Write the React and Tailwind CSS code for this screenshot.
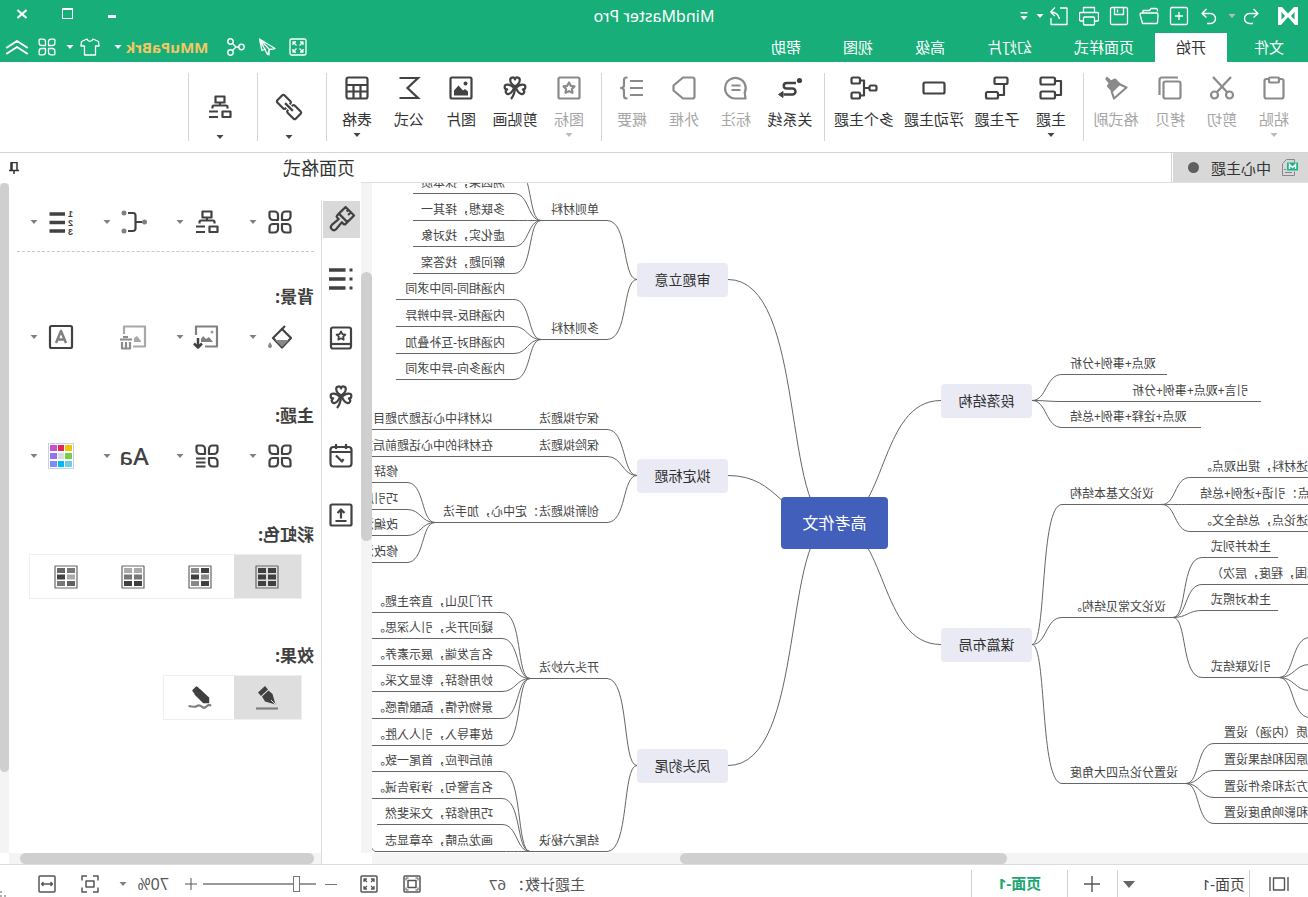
import React, { useState } from 'react';

const Svg = ({ children, w = 24, h = 24, size = 'w-6 h-6', sw = 2.2, className = '' }) => (
    <svg viewBox={`0 0 ${w} ${h}`} className={`${size} shrink-0 ${className}`} fill="none" stroke="currentColor"
        strokeWidth={sw} strokeLinejoin="round" aria-hidden="true">
        {children}
    </svg>
);

const Caret = ({ className = '' }) => (
    <svg viewBox="0 0 8 4" className={`w-2 h-1 shrink-0 ${className}`} fill="currentColor" aria-hidden="true">
        <path d="M.5 0h7L4 4z" />
    </svg>
);

/* ---------- icons ---------- */

const Star = () => <path d="M12 6.5l1.8 3.3 3.7.6-2.6 2.7.6 3.7-3.5-1.6-3.5 1.6.6-3.7-2.6-2.7 3.7-.6z" />;

const heart = 'M12 10.5C9 8.5 7.3 6.5 7.3 4.4A2.4 2.4 0 0 1 12 3.4a2.4 2.4 0 0 1 4.7 1C16.7 6.5 15 8.5 12 10.5z';

const Clover = () => (
    <>
        <path d={heart} />
        <path d={heart} transform="rotate(-104 12 11.5)" />
        <path d={heart} transform="rotate(104 12 11.5)" />
        <path d="M12 11c0 5 1.5 9 4 12" />
    </>
);

const OrgChart = () => (
    <>
        <rect x="7.5" y="1.5" width="9" height="6" />
        <path d="M12 7.5V11M4.5 13.5V12A1.5 1.5 0 0 1 6 10.5h12a1.5 1.5 0 0 1 1.5 1.5v1.5M14 16.5h9M14 22h9" />
        <rect x="1.5" y="16.5" width="8" height="5.5" />
    </>
);

const leaf = 'M2.5 1.5H6.5A3.5 3.5 0 0 1 10 5V10H5A3.5 3.5 0 0 1 1.5 6.5V2.5a1 1 0 0 1 1-1z';

const Petals = ({ list }) => (
    <>
        <path d={leaf} />
        <path d={leaf} transform="matrix(-1 0 0 1 24 0)" />
        <path d={leaf} transform="matrix(1 0 0 -1 0 24)" />
        {list
            ? <path d="M13.5 14.5H23M13.5 18.5H23M13.5 22.5H23" />
            : <path d={leaf} transform="matrix(-1 0 0 -1 24 24)" />}
    </>
);

const icons = {
    paste: <><rect x="2.5" y="3" width="19" height="19.5" rx="2" /><rect x="7" y="1.5" width="10" height="5" rx="1" fill="#fff" /></>,
    cut: <><path d="M3 1l14 15M21 1L7 16" /><circle cx="4.5" cy="19" r="3.5" /><circle cx="19.5" cy="19" r="3.5" /></>,
    copy: <><rect x="1.5" y="5.5" width="17" height="17" rx="2" /><path d="M4 1.5h16A2.5 2.5 0 0 1 22.5 4v15" /></>,
    brush: <><path d="M21 2L17 5.5l-4-2L8.5 8l7 7 4.5-5-2-3L21.500 3z" fill="currentColor" /><path d="M9 8L1.5 11.5 14 22.5l2.500-7.500" /></>,
    topic: <><rect x="8" y="1.5" width="14.5" height="7" rx="1.5" /><rect x="8" y="15.5" width="14.5" height="7" rx="1.5" /><path d="M8 5H2v14h6" /></>,
    subtopic: <><rect x="1.5" y="1.5" width="13" height="6.5" rx="1.5" /><rect x="11" y="16" width="12" height="6.5" rx="1.5" /><path d="M5 8v11h6" /></>,
    floating: <rect x="1.5" y="6.5" width="21" height="11" rx="1.5" />,
    multi: <><rect x="-.5" y="9.5" width="7" height="5" rx="1.5" /><rect x="16" y="1.5" width="8.5" height="6" rx="1.5" /><rect x="16" y="16.5" width="8.5" height="6" rx="1.5" /><path d="M6.5 12H12M16 4.5H12v15h4" /></>,
    relation: <><path d="M6 7h9.5a2.75 2.75 0 0 1 0 5.5h-6a2.75 2.75 0 0 0 0 6h9" strokeWidth="2.5" /><circle cx="2.5" cy="4.5" r="1.5" fill="currentColor" /><path d="M19 15.5l4.5 3-4.5 3z" fill="currentColor" strokeWidth="1" /></>,
    callout: <><path d="M2.5 22.5l.8-5.8A10.3 10.3 0 1 1 12 22.5z" /><path d="M7.5 9.5h9M7.5 14h9" /></>,
    boundary: <path d="M3.5 1.5H13l9.5 8v5l-9.5 8H3.5a2 2 0 0 1-2-2v-17a2 2 0 0 1 2-2z" />,
    summary: <><path d="M1 5h13M1 12h13M1 19h13" /><path d="M16.5 1.5h1A2.5 2.5 0 0 1 20 4v5c0 1.5 1 3 3 3-2 0-3 1.5-3 3v5a2.5 2.5 0 0 1-2.5 2.5h-1" /></>,
    mark: <><rect x="1.5" y="1.5" width="21" height="21" rx="1.5" /><Star /></>,
    clover: <Clover />,
    picture: <><rect x="1.5" y="1.5" width="21" height="21" rx="1.5" /><circle cx="7.5" cy="7.5" r="2" fill="currentColor" stroke="none" /><path d="M5 19.5v-4L8 13l2 1.5 4.5-5 4.5 5v5z" fill="currentColor" stroke="none" /></>,
    formula: <path d="M21.5 2H3l10.5 10L3 22h18.5" strokeLinejoin="miter" />,
    table: <><rect x="1.5" y="1.5" width="21" height="21" rx="2" /><path d="M2 9h20M2 15.5h20M8.5 9v13M15.5 9v13" /></>,
    link: (
        <g transform="rotate(-45 12 12)">
            <path d="M9 7H.5A1.500 1.500 0 0 0-1 8.500v7A1.500 1.500 0 0 0 .5 17H9a1.500 1.500 0 0 0 1.500-1.500v-1M9 7a1.500 1.500 0 0 1 1.500 1.500v1" />
            <path d="M15 7h8.500A1.500 1.500 0 0 1 25 8.500v7a1.500 1.500 0 0 1-1.500 1.500H15a1.500 1.500 0 0 1-1.500-1.500v-1M15 7a1.500 1.500 0 0 0-1.500 1.500v1" />
            <path d="M6.5 12h11" />
        </g>
    ),
    org: <OrgChart />,
    petals: <Petals />,
    petalList: <Petals list />,
    fork: <><path d="M4 12h6.500M18 3h-5a2.500 2.500 0 0 0-2.500 2.500v13A2.500 2.500 0 0 0 13 21h5" /><g fill="#808080" stroke="none"><circle cx="1.5" cy="12" r="2.5" /><circle cx="22" cy="3" r="2.5" /><circle cx="22" cy="21" r="2.5" /></g></>,
    numbers: <><path d="M8 4h15.5M8 12.5h15.5M8 21h15.5" strokeWidth="3.5" /><g fill="currentColor" stroke="none" fontSize="9" fontWeight="700" fontFamily="Liberation Sans"><text x="0" y="7">1</text><text x="0" y="16">2</text><text x="0" y="25">3</text></g></>,
    bucket: <><path d="M10 4l9 9-9 9.5L1 13z" /><path d="M10.5 4.5L7 1" /><path d="M3 15h14l-7 7z" fill="#888" stroke="none" /><path d="M22 17c1 2 2 3 2 4a2 2 0 0 1-4 0c0-1 1-2 2-4z" fill="#888" stroke="none" /></>,
    imageDown: <><path d="M23 10V1.5H2v20h12" stroke="#808080" /><path d="M6 17l4-5 3 2 3-3 2 3v3z" fill="#808080" stroke="none" /><circle cx="7" cy="7" r="1.5" fill="#999" stroke="none" /><path d="M21 13v9M17 18.5l4 4 4-4" strokeWidth="2.5" /></>,
    imageTrash: <><path d="M22 9V1.5H1v20h12" /><path d="M5 16l4-5 3 2v4H5z" fill="currentColor" stroke="none" /><path d="M14 14.5h12M18 12h5" stroke="#8c8c8c" /><path d="M16 17v6.5h8V17M20 17v6" stroke="#8c8c8c" /></>,
    letter: <><rect x="1" y="1" width="22" height="22" rx="1.5" /><path d="M7 18l5-12 5 12M8.5 14.5h7" stroke="#808080" strokeWidth="2.5" /></>,
    paint: <g transform="rotate(-45 12 12)"><path d="M6-.5h12V9H6zM6 9v2.5A1.5 1.5 0 0 0 7.5 13h2.3L9 22a3 3 0 0 0 6 0l-.8-9h2.3a1.5 1.5 0 0 0 1.5-1.5V9M10.5-.5v4M14-.5V2" /></g>,
    outline: <><path d="M7.5 3H24M7.5 12H24M7.5 21H24" strokeWidth="3.5" /><path d="M.5 3h3M.5 12h3M.5 21h3" strokeWidth="3" /></>,
    stickers: <><rect x="2" y="1.5" width="20" height="21" rx="2" /><path d="M2 18h20" /><path d="M12 5.5l1.4 2.7 3 .4-2.2 2.1.5 3-2.7-1.4-2.7 1.4.5-3-2.2-2.1 3-.4z" strokeWidth="1.8" /></>,
    calendar: <><rect x="1.5" y="3" width="21" height="19.5" rx="3" /><path d="M2 8h20M7 0v5M17 0v5M17 11.5l-6 6-1.500-2.500" /></>,
    upload: <><rect x="1.5" y="1.5" width="21" height="21" rx="1.5" /><path d="M12 15.5V7M8.5 10L12 6.5l3.5 3.5M6.5 18h11" /></>,
    pen: <><path d="M14 0l7 6.5-3 3.5-7-6.5z" fill="currentColor" stroke="none" /><path d="M10.5 4.500l6.500 6-3 5-10.500 3L6.500 8z" fill="currentColor" stroke="none" /><path d="M3.500 18.500L8 14" stroke="#e0e0e0" strokeWidth="1" /><path d="M1 22.5h22" stroke="#808080" /></>,
    pencil: <><path d="M13.5 2.5l2-1.500L19 4.500l-1.500 2zM12.500 3.500l4.500 4.500-8.500 8.500h-5V12z" fill="currentColor" strokeWidth="1.500" /><path d="M1 20c2-2 3-1 4.500.5s3.500 1.500 5 0S13.500 19 15 20s4 1 8.500 0" stroke="#808080" /></>,
};

const Swatch = ({ cells, plain }) => (
    <Svg sw={1.2}>
        <rect x="1" y="1" width="22" height="22" stroke="#666" fill={plain ? 'none' : '#fff'} />
        {cells.map((c, i) => (
            <rect key={i} x={i % 2 ? 13 : 3} y={3 + Math.floor(i / 2) * 6.5} width="8" height="5" fill={c} stroke="none" />
        ))}
    </Svg>
);

/* ---------- title bar ---------- */

const quickTools = [
    { name: '新建', icon: <><rect x="1.5" y="1.5" width="17" height="17" rx="1.5" /><path d="M10 6v8M6 10h8" /></> },
    { name: '打开', icon: <><path d="M1.5 5.5V4A1.5 1.5 0 0 1 3 2.5h5l1.5 2H16v2M2 17.5h14.5l2.5-9A1.5 1.5 0 0 0 17.5 7h-15A1.5 1.5 0 0 0 1 8.5l.5 8z" /></> },
    { name: '保存', icon: <><rect x="1.5" y="1.5" width="17" height="17" rx="1.5" /><path d="M5.5 1.5v7h9v-7M11.5 3.5v3" /></> },
    { name: '打印', icon: <><path d="M4.5 6V1.5h11V6M4 15H1.5a1 1 0 0 1-1-1V7.5a1 1 0 0 1 1-1h17a1 1 0 0 1 1 1V14a1 1 0 0 1-1 1H16" /><rect x="4.5" y="11" width="11" height="8" rx="1" /></> },
    { name: '导出', icon: <><path d="M9 2H2v16.5h16V12M18.5 6L14 1.5M18.5 6L14 10M18.5 6c-5 0-8 2-9 7" /></> },
];

const TitleBar = () => (
    <div className="grid h-[31px] grid-cols-[1fr_auto_1fr] items-center pb-px">
        <div className="flex items-center pl-2.5">
            <svg viewBox="0 0 20 18" className="w-5 h-[18px] mr-3" fill="#fff" aria-hidden="true">
                <path d="M0 0h4l6 6.5L16 0h4v18h-3l-7-8-7 8H0z" />
                <path d="M3.5 5v7.5L7 9zM16.5 5v7.5L13 9z" fill="#17ae79" />
            </svg>
            <button aria-label="撤销" className="flex w-[30px] justify-center">
                <Svg size="w-[18px] h-[18px]" w={18} h={18} sw={1.4}><path d="M6.5 2L2 6.5l4.5 4M2 6.5h8.5a5 5 0 0 1 0 10H7" /></Svg>
            </button>
            <Caret className="mr-1 text-[#bcbcbc]" />
            <button aria-label="重做" className="flex w-[30px] justify-center">
                <Svg size="w-[18px] h-[18px]" w={18} h={18} sw={1.4}><path d="M11.5 2L16 6.5l-4.5 4M16 6.5H7.5a5 5 0 0 0 0 10H11" /></Svg>
            </button>
            {quickTools.map((t) => (
                <button key={t.name} aria-label={t.name} className="flex w-[30px] justify-center">
                    <Svg size="w-5 h-5" w={20} h={20} sw={1.3}>{t.icon}</Svg>
                </button>
            ))}
            <Caret />
            <svg viewBox="0 0 8 8" className="ml-2 w-2 h-2" fill="#fff" aria-hidden="true"><path d="M.5 0h7v1.5h-7zM.5 4h7L4 8z" /></svg>
        </div>
        <h1 className="text-base leading-5">MindMaster Pro</h1>
        <div className="flex justify-end">
            <button aria-label="最小化" className="flex w-[45px] h-[31px] items-center justify-center"><span className="mt-0.5 h-[3px] w-2 bg-white" /></button>
            <button aria-label="最大化" className="flex w-[45px] h-[31px] items-center justify-center"><span className="h-[11px] w-[11px] border border-t-2 border-white mb-1" /></button>
            <button aria-label="关闭" className="flex w-[45px] h-[31px] items-center justify-center">
                <Svg size="w-2.5 h-2.5" w={10} h={10} sw={2} className="mb-1"><path d="M.5 1l9 8M9.5 1l-9 8" /></Svg>
            </button>
        </div>
    </div>
);

const menus = ['文件', '开始', '页面样式', '幻灯片', '高级', '视图', '帮助'];

const MenuBar = () => {
    const [active, setActive] = useState('开始');
    return (
        <div className="flex h-[31px] items-end justify-between">
            <div className="flex pl-[3px]">
                {menus.map((m) => (
                    <button key={m} onClick={() => setActive(m)}
                        className={`h-[29px] px-[21px] text-[15px] leading-[29px] ${active === m ? 'bg-white text-[#333]' : 'text-white'} ${m === '文件' ? 'mr-1.5' : ''}`}>
                        {m}
                    </button>
                ))}
            </div>
            <div className="flex h-[31px] items-center pr-1.5">
                <button aria-label="全屏" className="flex w-[31px] justify-center">
                    <Svg size="w-[18px] h-[18px]" w={18} h={18} sw={1.3}><rect x="1" y="1" width="16" height="16" rx="1.5" /><path d="M4 7V4h3M4 4l3.5 3.5M14 7V4h-3M14 4l-3.5 3.5M4 11v3h3M4 14l3.5-3.5M14 11v3h-3M14 14l-3.5-3.5" /></Svg>
                </button>
                <button aria-label="发送" className="flex w-[31px] justify-center">
                    <Svg size="w-[18px] h-[18px]" w={18} h={18} sw={1.3}><path d="M16.5 1L1 10.5l5.500 1 2 5zM16.5 1L14 12.5l-4-1.500M16.5 1l-10 10.500M7 17.5v-6" /></Svg>
                </button>
                <button aria-label="分享" className="flex w-[31px] justify-center">
                    <Svg size="w-[18px] h-[18px]" w={18} h={18} sw={1.4}><circle cx="3.5" cy="9" r="2.7" /><circle cx="14.5" cy="3.5" r="2.7" /><circle cx="14.5" cy="14.5" r="2.7" /><path d="M6 9h3l3.5-3.5M9 9l3.5 3.5" /></Svg>
                </button>
                <button className="ml-3 flex items-center gap-1">
                    <span className="text-[15px] leading-5 font-bold text-[#f5c763]">MMuPaBrk</span>
                    <Caret />
                </button>
                <button aria-label="主题皮肤" className="ml-3.5 flex items-center gap-1.5">
                    <Svg size="w-5 h-5" w={20} h={20} sw={1.3}><path d="M7 2L1.5 4.500 1 9h3.500v9h11V9H19l-.5-4.500L13 2c-.5 1.500-1.500 2.300-3 2.300S7.500 3.500 7 2z" /></Svg>
                    <Caret />
                </button>
                <button aria-label="应用" className="ml-2.5">
                    <Svg size="w-[18px] h-[18px]" sw={1.7}><Petals /></Svg>
                </button>
                <button aria-label="收起" className="ml-2.5">
                    <Svg size="w-[22px] h-4" w={22} h={16} sw={2}><path d="M1 8.5L11 2l10 6.5M1 14.5L11 8l10 6.5" strokeLinecap="round" /></Svg>
                </button>
            </div>
        </div>
    );
};

/* ---------- ribbon ---------- */

const ribbon = [
    { pad: 'pl-2 pr-1', items: [
        { label: '粘贴', icon: 'paste', caret: true, off: true, w: 'w-[52px]' },
        { label: '剪切', icon: 'cut', off: true, w: 'w-[52px]' },
        { label: '拷贝', icon: 'copy', off: true, w: 'w-[52px]' },
        { label: '格式刷', icon: 'brush', off: true, w: 'w-14' },
    ] },
    { pad: 'pl-1.5 pr-1', items: [
        { label: '主题', icon: 'topic', caret: true, w: 'w-[52px]' },
        { label: '子主题', icon: 'subtopic', w: 'w-14' },
        { label: '浮动主题', icon: 'floating', w: 'w-[70px]' },
        { label: '多个主题', icon: 'multi', w: 'w-[70px]' },
    ] },
    { pad: 'pl-1.5 pr-1', items: [
        { label: '关系线', icon: 'relation', w: 'w-14' },
        { label: '标注', icon: 'callout', off: true, w: 'w-[52px]' },
        { label: '外框', icon: 'boundary', off: true, w: 'w-[52px]' },
        { label: '概要', icon: 'summary', off: true, w: 'w-[52px]' },
    ] },
    { pad: 'pl-1.5 pr-1', items: [
        { label: '图标', icon: 'mark', caret: true, off: true, w: 'w-[52px]' },
        { label: '剪贴画', icon: 'clover', w: 'w-14' },
        { label: '图片', icon: 'picture', w: 'w-[52px]' },
        { label: '公式', icon: 'formula', w: 'w-[52px]' },
        { label: '表格', icon: 'table', caret: true, w: 'w-[52px]' },
    ] },
];

const Divider = () => <div className="mt-[11px] h-[68px] w-px bg-[#d4d4d4]" />;

const Ribbon = () => (
    <div className="flex h-[91px] border-b border-[#d4d4d4] bg-white">
        {ribbon.map((g, i) => (
            <React.Fragment key={i}>
                <div className={`flex ${g.pad}`}>
                    {g.items.map((b) => (
                        <button key={b.label} disabled={b.off} className={`flex flex-col items-center pt-3.5 ${b.w}`}>
                            <Svg className={`overflow-visible ${b.off ? 'text-[#8a8a8a]' : 'text-[#424242]'}`}>{icons[b.icon]}</Svg>
                            <span className={`mt-[9px] text-[15px] leading-5 whitespace-nowrap ${b.off ? 'text-[#a6a6a6]' : 'text-[#333]'}`}>{b.label}</span>
                            {b.caret && <Caret className={`mt-1 ${b.off ? 'text-[#bbb]' : 'text-[#404454]'}`} />}
                        </button>
                    ))}
                </div>
                <Divider />
            </React.Fragment>
        ))}
        {[['超链接', 'link'], ['布局', 'org']].map(([label, icon]) => (
            <React.Fragment key={icon}>
                <button aria-label={label} className="flex w-[68px] flex-col items-center pl-1.5 pt-[33px] text-[#424242]">
                    <Svg className="overflow-visible">{icons[icon]}</Svg>
                    <Caret className="mt-4 text-[#404454]" />
                </button>
                <Divider />
            </React.Fragment>
        ))}
    </div>
);

/* ---------- mind map ---------- */

const mainTopics = [
    { text: '审题立意', x: 580, y: 96, link: 580 },
    { text: '拟定标题', x: 580, y: 292, link: 580 },
    { text: '凤头豹尾', x: 580, y: 582, link: 580 },
    { text: '段落结构', x: 276, y: 217, link: 367 },
    { text: '谋篇布局', x: 276, y: 461, link: 367 },
];

// from: end of the parent's line, x/y: where this line starts, end: where it stops, tx: text edge
const right = (from, x, end, tx, rows) => rows.map(([y, text, stop]) => ({ from, x, y, end: stop || end, tx, text }));
const left = (from, x, end, tx, rows) => right(from, x, end, tx, rows).map((t) => ({ ...t, flip: true }));

const topics = [
    ...right([671, 96], 701, 767, 709, [[37, '单则材料'], [156, '多则材料']]),
    ...right([767, 37], 794, 895, 803, [[-17, ''], [10, '溯因果，探本质'], [37, '多联想，择其一'], [63, '虚化实，找对象'], [90, '解问题，找答案']]),
    ...right([767, 156], 794, 912, 803, [[116, '内涵相同-同中求同'], [143, '内涵相反-异中辨异'], [170, '内涵相对-互补叠加'], [196, '内涵多向-异中求同']]),
    ...right([671, 292], 701, 960, 709, [[246, '保守拟题法'], [273, '保险拟题法'], [339, '创新拟题法：定中心，加手法', 873]]),
    ...right([780, 246], 806, 960, 815, [[246, '以材料中心话题为题目']]),
    ...right([780, 273], 806, 960, 815, [[273, '在材料的中心话题前后加词']]),
    ...right([873, 339], 901, 960, 910, [[299, '修辞'], [326, '巧引用'], [352, '改编法'], [379, '修改法']]),
    ...right([671, 582], 701, 778, 709, [[495, '开头六妙法'], [668, '结尾六秘诀']]),
    ...right([778, 495], 806, 960, 815, [[429, '开门见山，直奔主题。'], [455, '疑问开头，引人深思。'], [482, '名言发端，展示素养。'], [508, '妙用修辞，彰显文采。'], [535, '景物传情，酝酿情感。'], [562, '故事导入，引人入胜。']]),
    ...right([778, 668], 806, 960, 815, [[588, '前后呼应，首尾一致。'], [615, '名言警句，谆谆告诫。'], [641, '巧用修辞，文采斐然', 931], [668, '画龙点睛，卒章显志', 932]]),
    ...right([932, 668], 940, 960, 950, [[662, '']]),

    ...left([276, 217], 246, 141, 238, [[191, '观点+事例+分析'], [244, '观点+诠释+事例+总结', 107]]),
    ...left([276, 217], 246, 47, 176, [[218, '引言+观点+事例+分析']]),
    ...left([276, 461], 246, 146, 238, [[321, '议论文基本结构'], [434, '议论文常见结构。', 135], [600, '设置分论点四大角度', 122]]),
    ...left([146, 321], 118, -10, 108, [[294, '述材料，提出观点。'], [321, '点：引语+述例+总结'], [348, '述论点，总结全文。']]),
    ...left([135, 434], 106, 30, 97, [[374, '主体并列式'], [401, '范围，程度，层次）', -10], [427, '主体对照式'], [494, '引议联结式', 29]]),
    ...left([29, 494], -2, -10, -10, [[454, ''], [481, ''], [507, ''], [534, '']]),
    ...left([122, 600], 94, -10, 84, [[560, '质（内涵）设置'], [587, '原因和结果设置'], [614, '方法和条件设置'], [640, '和影响角度设置']]),
];

// steep links hug the parent side, flat ones are symmetric
const curve = (x0, y0, x1, y1) => {
    const dx = x1 - x0;
    const bend = Math.min(0.5, Math.max(0.25, 0.58 - 0.15 * Math.abs((y1 - y0) / dx)));
    return `M${x0} ${y0}C${x0 + dx / 2} ${y0} ${x0 + dx * bend} ${y1} ${x1} ${y1}`;
};

const MindMap = () => (
    <div className="relative flex-1 overflow-hidden bg-white">
        <svg className="absolute inset-0 h-full w-full" fill="none" stroke="#666" strokeWidth="1" aria-hidden="true">
            <g transform="translate(0 0.5)">
                {mainTopics.map((m) => <path key={m.text} d={curve(474, 340, m.link, m.y)} />)}
                {topics.map((t, i) => <path key={i} d={`${curve(...t.from, t.x, t.y)}H${t.end}`} />)}
            </g>
        </svg>
        <div className="absolute left-[420px] top-[314px] flex h-[52px] w-[107px] items-center justify-center rounded bg-[#425fbb] text-base text-white">
            高考作文
        </div>
        {mainTopics.map((m) => (
            <div key={m.text} style={{ left: m.x, top: m.y - 16 }}
                className="absolute flex h-[34px] w-[91px] items-center justify-center rounded bg-[#e9eaf4] text-sm text-[#303030]">
                {m.text}
            </div>
        ))}
        {topics.filter((t) => t.text).map((t) => (
            <div key={t.text} style={{ left: t.tx, top: t.y - 18 }}
                className={`absolute text-xs leading-4 whitespace-nowrap text-[#444] ${t.flip ? '-translate-x-full' : ''}`}>
                {t.text}
            </div>
        ))}
    </div>
);

const Workspace = () => (
    <div className="flex min-w-0 flex-1 flex-col">
        <div className="flex h-[30px] border-b border-[#e0e0e0]">
            <div className="flex w-[135px] items-center bg-[#d8d8d8] pl-2.5">
                <svg viewBox="0 0 16 17" className="w-4 h-[17px] mr-[11px]" fill="none" stroke="#888" aria-hidden="true">
                    <path d="M3.5 3.5v-3h8l4 4v12h-12v-4M6 13.5h7M12 10.5h2" />
                    <rect y="3.5" width="11" height="8" fill="#12b886" stroke="none" />
                    <path d="M2.5 10V5.5l3 3 3-3V10" stroke="#fff" strokeWidth="1.5" />
                </svg>
                <span className="text-[15px] leading-5 text-[#333]">中心主题</span>
                <span className="ml-3 h-[11px] w-[11px] rounded-full bg-[#5f5f5f]" />
            </div>
            <div className="ml-px w-px bg-[#d4d4d4]" />
        </div>
        <div className="flex min-h-0 flex-1">
            <div className="flex min-w-0 flex-1 flex-col">
                <MindMap />
                <div className="h-[11px] bg-[#f4f4f4]">
                    <div className="ml-[301px] h-full w-[327px] rounded-full bg-[#cfcfcf]" />
                </div>
            </div>
            <div className="mb-[11px] w-[11px] bg-[#f4f4f4] pt-[89px]">
                <div className="h-[269px] rounded-full bg-[#cfcfcf]" />
            </div>
        </div>
    </div>
);

/* ---------- format panel ---------- */

const ToolRow = ({ items }) => (
    <div className="flex h-6 pl-[22px]">
        {items.map((it) => (
            <button key={it.name} aria-label={it.name} className={`flex w-[73px] shrink-0 items-center gap-[11px] ${it.off ? 'text-[#a8a8a8]' : 'text-[#424242]'}`}>
                {it.node || <Svg className="overflow-visible">{icons[it.icon]}</Svg>}
                {!it.off && <Caret className="text-[#808080]" />}
            </button>
        ))}
    </div>
);

const themeColors = ['#efc400', '#e02a55', '#c850cc', '#72d044', '#dcdcdc', '#9175f0', '#6ccde0', '#00b9f5', '#7a8cff'];

const ColorGrid = () => (
    <span className="-mx-px grid h-[26px] w-[26px] shrink-0 grid-cols-3 gap-x-px gap-y-0.5 border border-[#c6d0ea] bg-white p-px">
        {themeColors.map((c) => <span key={c} style={{ backgroundColor: c }} />)}
    </span>
);

const rainbow = [
    ['#404040', '#404040', '#404040', '#404040', '#404040', '#404040'],
    ['#404040', '#888', '#888', '#404040', '#404040', '#888'],
    ['#aaa', '#aaa', '#777', '#777', '#404040', '#404040'],
    ['#777', '#666', '#aaa', '#404040', '#606060', '#777'],
];

const Heading = ({ children, className }) => (
    <h3 className={`text-[17px] leading-6 font-bold text-[#404040] ${className}`}>{children}</h3>
);

const Choice = ({ label, options }) => {
    const [picked, setPicked] = useState(0);
    return (
        <div role="group" aria-label={label} className="ml-3 mt-[7px] flex h-[45px] w-fit border border-[#efefef] pr-[3px]">
            {options.map((o, i) => (
                <button key={i} aria-label={`${label} ${i + 1}`} aria-pressed={picked === i} onClick={() => setPicked(i)}
                    className={`flex w-[67px] items-center justify-center text-[#404040] ${picked === i ? 'bg-[#dedede]' : ''}`}>
                    {o}
                </button>
            ))}
        </div>
    );
};

const sideTabs = ['paint', 'outline', 'stickers', 'clover', 'calendar', 'upload'];

const FormatPanel = () => {
    const [tab, setTab] = useState('paint');
    return (
        <aside className="flex w-[361px] flex-col bg-white">
            <div className="flex h-[30px] items-center justify-between pl-1.5 pr-2">
                <h2 className="text-[18px] leading-6 text-[#333]">页面格式</h2>
                <button aria-label="固定" className="text-[#333]">
                    <Svg size="w-3 h-3" w={12} h={12} sw={1.5}><path d="M1 8.5h10M3 8.5v-8h6v8M6 8.5V12M8 1v7" /></Svg>
                </button>
            </div>
            <div className="flex min-h-0 flex-1">
                <div className="mt-[18px] flex w-10 shrink-0 flex-col items-start gap-[22px] border-r border-[#dcdcdc] pl-px">
                    {sideTabs.map((s) => (
                        <button key={s} aria-label={s} onClick={() => setTab(s)}
                            className={`flex h-[37px] w-[37px] items-center justify-center text-[#424242] ${tab === s ? 'bg-[#d9d9d9]' : ''}`}>
                            <Svg className="overflow-visible">{icons[s]}</Svg>
                        </button>
                    ))}
                </div>
                <div className="flex min-w-0 flex-1 flex-col">
                    <div className="min-h-0 flex-1 overflow-hidden pl-[7px] pt-[27px]">
                        <ToolRow items={[{ name: '结构', icon: 'petals' }, { name: '布局', icon: 'org' }, { name: '连接线', icon: 'fork' }, { name: '编号', icon: 'numbers' }]} />
                        <div className="mr-2 mt-[17px] border-t border-dashed border-[#c8c8c8]" />
                        <Heading className="mt-[33px]">背景:</Heading>
                        <div className="h-4" />
                        <ToolRow items={[{ name: '填充', icon: 'bucket' }, { name: '插入图片', icon: 'imageDown' }, { name: '删除图片', icon: 'imageTrash', off: true }, { name: '水印', icon: 'letter' }]} />
                        <Heading className="mt-[55px]">主题:</Heading>
                        <div className="h-4" />
                        <ToolRow items={[
                            { name: '主题', icon: 'petals' },
                            { name: '主题列表', icon: 'petalList' },
                            { name: '字体', node: <span className="-mx-1 w-8 shrink-0 text-center text-[24px] leading-6 font-medium">Aa</span> },
                            { name: '颜色', node: <ColorGrid /> },
                        ]} />
                        <Heading className="mt-[55px]">彩虹色:</Heading>
                        <Choice label="彩虹色" options={rainbow.map((c, i) => <Swatch key={i} cells={c} plain={i === 0} />)} />
                        <Heading className="mt-[45px]">效果:</Heading>
                        <Choice label="效果" options={[<Svg key="pen">{icons.pen}</Svg>, <Svg key="pencil">{icons.pencil}</Svg>]} />
                    </div>
                    <div className="h-[11px] bg-[#f4f4f4] pl-[7px] pr-[11px]">
                        <div className="h-full rounded-full bg-[#cfcfcf]" />
                    </div>
                </div>
                <div className="mb-[11px] w-[9px] shrink-0 bg-[#f4f4f4]">
                    <div className="h-[589px] rounded-lg bg-[#cfcfcf]" />
                </div>
            </div>
        </aside>
    );
};

/* ---------- status bar ---------- */

const StatusBar = () => {
    const [zoom, setZoom] = useState(70);
    const sep = <div className="mt-[5px] h-[27px] w-px shrink-0 bg-[#d0d0d0]" />;
    return (
        <footer className="flex h-[33px] items-center border-t border-[#dcdcdc] bg-white text-[15px] leading-5 text-[#555]">
            <button aria-label="页面列表" className="flex w-[58px] justify-center pt-1.5">
                <Svg size="w-5 h-3.5" w={20} h={14} sw={1.4}><path d="M1 0v14M19 0v14" /><rect x="4.5" y="1" width="11" height="12" /></Svg>
            </button>
            {sep}
            <div className="flex w-[131px] items-center pl-1 pt-1.5">
                <select aria-label="页面" className="flex-1 appearance-none bg-transparent text-[#444] outline-none">
                    <option>页面-1</option>
                </select>
                <svg viewBox="0 0 12 7" className="mr-[5px] w-3 h-[7px]" fill="#666" aria-hidden="true"><path d="M0 0h12L6 7z" /></svg>
            </div>
            {sep}
            <button aria-label="添加页面" className="flex w-[49px] justify-center pt-1.5">
                <Svg size="w-4 h-4" w={16} h={16} sw={1.4}><path d="M8 0v16M0 8h16" /></Svg>
            </button>
            {sep}
            <button className="w-[95px] pt-1 text-center font-bold text-[#1ba672]">页面-1</button>
            {sep}
            <div className="flex-1" />
            <p className="w-[164px] pt-1.5 whitespace-nowrap">主题计数：<span className="ml-1">67</span></p>
            <div className="flex items-center gap-[25px] pt-1.5 text-[#555]">
                <button aria-label="适应页面">
                    <Svg size="w-[18px] h-[18px]" w={18} h={18} sw={1.5}><rect x="1" y="1" width="16" height="16" rx="1" /><rect x="5" y="5.5" width="8" height="7" /><path d="M3 5.5V3h2.5M15 5.5V3h-2.5M3 12.5V15h2.5M15 12.5V15h-2.5" strokeWidth="1" /></Svg>
                </button>
                <button aria-label="全屏显示">
                    <Svg size="w-[18px] h-[18px]" w={18} h={18} sw={1.5}><rect x="1" y="1" width="16" height="16" rx="1" /><path d="M4 7V4h3M4 4l3 3M14 7V4h-3M14 4l-3 3M4 11v3h3M4 14l3-3M14 11v3h-3M14 14l-3-3" strokeWidth="1.3" /></Svg>
                </button>
            </div>
            <button aria-label="缩小" onClick={() => setZoom(Math.max(10, zoom - 10))} className="ml-[23px] flex h-5 w-3 items-center pt-1.5"><span className="h-px w-3 bg-[#777]" /></button>
            <input type="range" aria-label="缩放" min="10" max="400" value={zoom} onChange={(e) => setZoom(+e.target.value)}
                className="ml-[9px] mr-1.5 mt-1.5 h-4 w-[113px] appearance-none bg-transparent [&::-webkit-slider-runnable-track]:h-0.5 [&::-webkit-slider-runnable-track]:bg-[#999] [&::-webkit-slider-thumb]:-mt-[7px] [&::-webkit-slider-thumb]:h-4 [&::-webkit-slider-thumb]:w-[7px] [&::-webkit-slider-thumb]:appearance-none [&::-webkit-slider-thumb]:border [&::-webkit-slider-thumb]:border-[#777] [&::-webkit-slider-thumb]:bg-white" />
            <button aria-label="放大" onClick={() => setZoom(Math.min(400, zoom + 10))} className="pt-1.5">
                <Svg size="w-3 h-3" w={12} h={12} sw={1}><path d="M6 0v12M0 6h12" /></Svg>
            </button>
            <div className="ml-4 flex w-[50px] items-center justify-between pt-1.5">
                <select aria-label="缩放比例" className="appearance-none bg-transparent text-base leading-5 outline-none">
                    <option>{zoom}%</option>
                </select>
                <Caret className="text-[#808080]" />
            </div>
            <div className="flex items-center gap-[25px] pl-5 pr-8 pt-1.5">
                <button aria-label="适应选择">
                    <Svg size="w-[18px] h-[18px]" w={18} h={18} sw={1.5}><path d="M1 5.5V1h5M12 1h5v4.5M17 12.5V17h-5M6 17H1v-4.5" /><rect x="5" y="6" width="8" height="6" /></Svg>
                </button>
                <button aria-label="适应宽度">
                    <Svg size="w-[18px] h-[18px]" w={18} h={18} sw={1.5}><rect x="1" y="1" width="16" height="16" rx="1" /><path d="M3.5 9h11M5.5 7l-2 2 2 2M12.5 7l2 2-2 2" strokeWidth="1.3" /></Svg>
                </button>
            </div>
            <svg viewBox="0 0 6 6" className="w-1.5 h-1.5 self-end" fill="#b0b0b0" aria-hidden="true"><path d="M4 0h2v2H4zM0 4h2v2H0zM4 4h2v2H4z" /></svg>
        </footer>
    );
};

const App = () => (
    <div className="flex h-screen flex-col overflow-hidden bg-white font-['Noto_Sans','Noto_Sans_CJK_SC',sans-serif] -scale-x-100">
        <header className="bg-[#17ae79] text-white">
            <TitleBar />
            <MenuBar />
        </header>
        <Ribbon />
        <main className="flex min-h-0 flex-1">
            <Workspace />
            <FormatPanel />
        </main>
        <StatusBar />
    </div>
);

export default App;
